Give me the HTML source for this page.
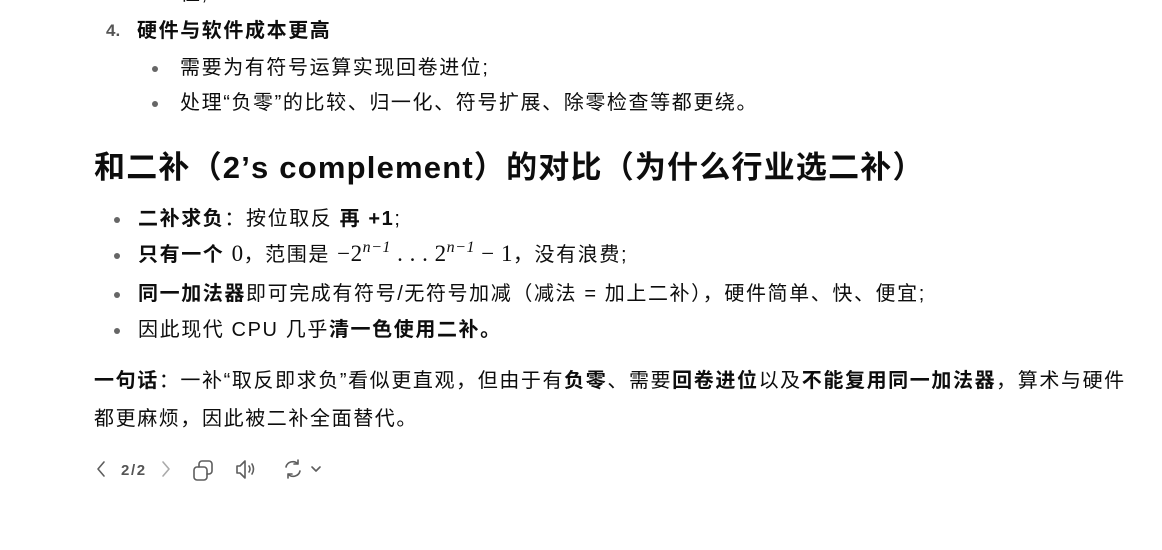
<!DOCTYPE html>
<html><head><meta charset="utf-8"><style>
body{margin:0;width:1162px;height:550px;background:#fff;overflow:hidden;font-family:"Liberation Sans","Noto Sans CJK SC",sans-serif;color:#0d0d0d;font-size:20px;letter-spacing:1.6px}
.l{position:absolute;white-space:nowrap;line-height:24px;height:24px}
.d{position:absolute;width:6px;height:6px;border-radius:50%;background:#666}
b{font-weight:700}
.m{font-family:"Liberation Serif","DejaVu Serif",serif;font-size:23px;letter-spacing:0.5px;line-height:20px}
.m sup{font-size:16px;font-style:italic;line-height:0;vertical-align:9px}
h2{position:absolute;margin:0;left:94px;top:148px;font-size:31px;font-weight:700;line-height:40px;white-space:nowrap;letter-spacing:1.2px}
</style></head><body>
<div class="l" style="left:180px;top:-18px">位;</div>
<div class="l" style="left:106px;top:19px;color:#555;font-weight:700;font-size:17px;letter-spacing:0">4.</div>
<div class="l" style="left:137px;top:19px"><b>硬件与软件成本更高</b></div>
<div class="d" style="left:152px;top:66px"></div>
<div class="l" style="left:180px;top:56px">需要为有符号运算实现回卷进位;</div>
<div class="d" style="left:152px;top:101px"></div>
<div class="l" style="left:180px;top:91px">处理“负零”的比较、归一化、符号扩展、除零检查等都更绕。</div>
<h2>和二补（2’s complement）的对比（为什么行业选二补）</h2>
<div class="d" style="left:114px;top:217px"></div>
<div class="l" style="left:138px;top:207px"><b>二补求负</b>：按位取反 <b>再 +1</b>;</div>
<div class="d" style="left:114px;top:253px"></div>
<div class="l" style="left:138px;top:243px"><b>只有一个</b> <span class="m">0</span>，范围是 <span class="m">−2<sup>n−1</sup> . . . 2<sup>n−1</sup> − 1</span>，没有浪费;</div>
<div class="d" style="left:114px;top:292px"></div>
<div class="l" style="left:138px;top:282px"><b>同一加法器</b>即可完成有符号/无符号加减（减法 = 加上二补），硬件简单、快、便宜;</div>
<div class="d" style="left:114px;top:328px"></div>
<div class="l" style="left:138px;top:318px">因此现代 CPU 几乎<b>清一色使用二补。</b></div>
<div class="l" style="left:94px;top:369px"><b>一句话</b>：一补“取反即求负”看似更直观，但由于有<b>负零</b>、需要<b>回卷进位</b>以及<b>不能复用同一加法器</b>，算术与硬件</div>
<div class="l" style="left:94px;top:407px">都更麻烦，因此被二补全面替代。</div>
<svg style="position:absolute;left:90px;top:455px" width="250" height="30" fill="none" stroke="#5d5d5d" stroke-width="1.6" stroke-linecap="round" stroke-linejoin="round">
<path d="M14 7 L8 14 L14 21"/>
<text x="31" y="20" fill="#555" stroke="none" font-family="Liberation Sans" font-weight="700" font-size="15">2/2</text>
<path d="M73 7 L79 14 L73 21" stroke="#aaa"/>
<rect x="104" y="12" width="13" height="13" rx="3"/>
<path d="M109 12 V9 a3 3 0 0 1 3-3 h7 a3 3 0 0 1 3 3 v7 a3 3 0 0 1-3 3 h-2"/>
<path d="M147 11 h3 l5-5 v17 l-5-5 h-3 z"/>
<path d="M159 11 q2 3 0 6 M162 9 q3 5 0 10"/>
<path d="M208 9 a7 7 0 0 0-12 3 M198 19 a7 7 0 0 0 12-3 M208 5 v4 h-4 M198 23 v-4 h4"/>
<path d="M222 12 l4 4 l4-4"/>
</svg>
</body></html>
